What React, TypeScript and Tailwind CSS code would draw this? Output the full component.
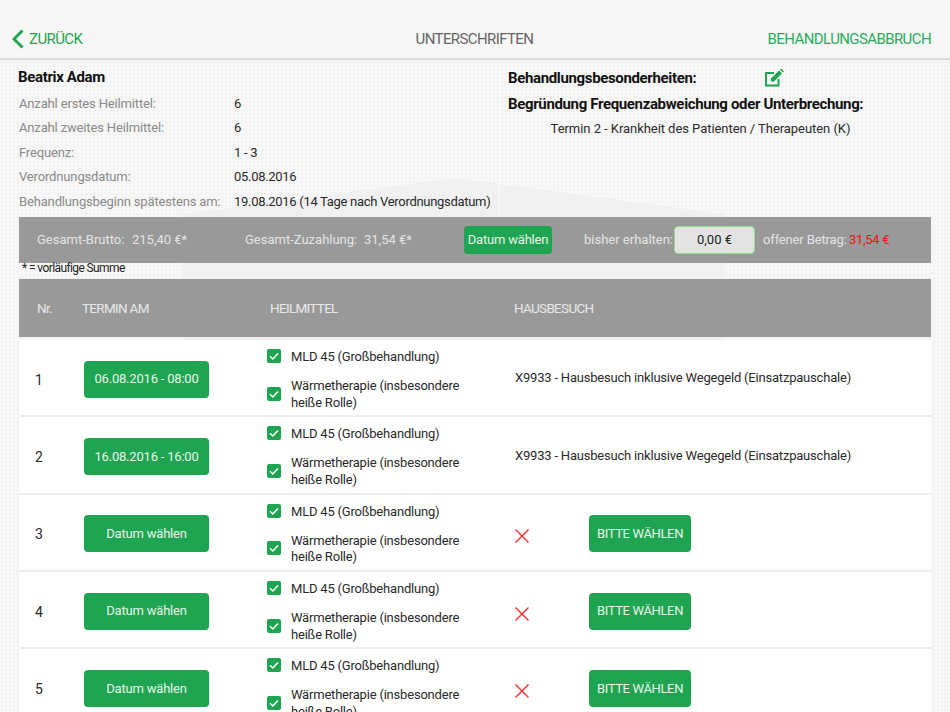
import React from 'react';

const rows = [
  { nr: 1, termin: '06.08.2016 - 08:00', besuch: true },
  { nr: 2, termin: '16.08.2016 - 16:00', besuch: true },
  { nr: 3, termin: 'Datum wählen', besuch: false },
  { nr: 4, termin: 'Datum wählen', besuch: false },
  { nr: 5, termin: 'Datum wählen', besuch: false },
];

const infos = [
  ['Anzahl erstes Heilmittel:', '6'],
  ['Anzahl zweites Heilmittel:', '6'],
  ['Frequenz:', '1 - 3'],
  ['Verordnungsdatum:', '05.08.2016'],
  ['Behandlungsbeginn spätestens am:', '19.08.2016 (14 Tage nach Verordnungsdatum)'],
];

const Check: React.FC = () => (
  <span className="flex h-[14px] w-[14px] shrink-0 items-center justify-center rounded-[2px] bg-[#1fa451]">
    <svg viewBox="0 0 14 14" className="h-[14px] w-[14px]" fill="none" stroke="#ffffff" strokeWidth="1.5">
      <path d="M3 7.2 L5.8 10 L11 4.4" />
    </svg>
  </span>
);

const Row: React.FC<{ nr: number; termin: string; besuch: boolean }> = ({ nr, termin, besuch }) => (
  <div className="flex h-[77.33px] shrink-0 items-center whitespace-nowrap border-b-2 border-[#eeeeee] bg-white pt-[3px] text-[#2a2a2a]">
    <div className="w-[65px] translate-y-px pl-[16px] text-[14px]">{nr}</div>
    <div className="w-[183px]">
      <button className="h-[37px] w-[125px] rounded-[4px] bg-[#1fa451] text-[#e6f5ea]">{termin}</button>
    </div>
    <div className="flex w-[248px] flex-col gap-[13px]">
      <div className="flex items-center gap-[10px] leading-[16px]">
        <Check />
        <span className="translate-y-px">MLD 45 (Großbehandlung)</span>
      </div>
      <div className="flex items-center gap-[10px] leading-[16.5px]">
        <Check />
        <span className="translate-y-px">
          Wärmetherapie (insbesondere
          <br />
          heiße Rolle)
        </span>
      </div>
    </div>
    {besuch ? (
      <div className="mt-[-2px]">X9933 - Hausbesuch inklusive Wegegeld (Einsatzpauschale)</div>
    ) : (
      <div className="flex items-center">
        <svg viewBox="0 0 14 14" className="mt-[5px] h-[14px] w-[14px]" fill="none" stroke="#f62a2a" strokeWidth="1.4">
          <path d="M0.5 0.5 L13.5 13.5 M13.5 0.5 L0.5 13.5" />
        </svg>
        <button className="ml-[60px] h-[37px] w-[102px] rounded-[4px] bg-[#1fa451] tracking-[-0.35px] text-[#e6f5ea]">
          BITTE WÄHLEN
        </button>
      </div>
    )}
  </div>
);

export default function App() {
  return (
    <div className="relative h-[712px] w-[950px] overflow-hidden bg-[#f7f7f7] bg-[radial-gradient(#f1f1f1_1px,transparent_1px)] bg-[length:4px_4px] font-['Roboto',sans-serif] text-[13px] tracking-[-0.2px]">
      {/* grey shape behind the content */}
      <svg className="absolute left-0 top-0" width="950" height="345" viewBox="0 0 950 345">
        <polygon points="182,214 455,178 724,214 724,345 182,345" fill="#f0f0f0" />
      </svg>

      <div className="relative flex h-full flex-col">
        <header className="flex h-[60px] shrink-0 items-end justify-between border-b-2 border-[#dcdcdc] bg-[#f7f7f7] pb-[8px] pl-[12px] pr-[19px] text-[15px] tracking-[-0.6px]">
          <div className="flex items-center gap-[5px] text-[#1fa451]">
            <svg viewBox="0 0 12 20" className="h-[20px] w-[12px]" fill="none" stroke="#1fa451" strokeWidth="3">
              <path d="M10.5 1.5 L2 10 L10.5 18.5" />
            </svg>
            <span>ZURÜCK</span>
          </div>
          <span className="ml-[99px] text-[#666666]">UNTERSCHRIFTEN</span>
          <span className="text-[#2bab5e]">BEHANDLUNGSABBRUCH</span>
        </header>

        <div className="flex h-[157px] shrink-0 whitespace-nowrap pl-[18px] pt-[6px]">
          <div className="w-[482px] border-r border-[#fbfbfb]">
            <div className="h-[25px] text-[15px] font-bold leading-[22px] tracking-[-0.35px] text-[#111111]">Beatrix Adam</div>
            {infos.map(([label, value]) => (
              <div key={label} className="flex h-[24.5px] items-center">
                <span className="ml-[1px] w-[215px] tracking-[-0.15px] text-[#8a8a8a]">{label}</span>
                <span className="tracking-[-0.3px] text-[#2a2a2a]">{value}</span>
              </div>
            ))}
          </div>
          <div className="pl-[8px]">
            <div className="flex h-[24px] items-center text-[15px] font-bold tracking-[-0.35px] text-[#111111]">
              <span className="w-[256px]">Behandlungsbesonderheiten:</span>
              <svg viewBox="0 0 20 20" className="h-[20px] w-[20px]">
                <path d="M14.5 11 V17.5 H2 V5 H10" fill="none" stroke="#1fa451" strokeWidth="2" />
                <path d="M7 10.5 L15 2.5 L18 5.5 L10 13.5 L7 13.5 Z M16 1.5 L17 0.5 L20 3.5 L19 4.5 Z" fill="#1fa451" />
              </svg>
            </div>
            <div className="mt-[2px] h-[24px] text-[15px] font-bold leading-[24px] tracking-[-0.35px] text-[#111111]">
              Begründung Frequenzabweichung oder Unterbrechung:
            </div>
            <div className="mt-[1px] w-[385px] text-center leading-[24px] tracking-[-0.05px] text-[#2a2a2a]">
              Termin 2 - Krankheit des Patienten / Therapeuten (K)
            </div>
          </div>
        </div>

        <div className="ml-[19px] flex h-[46px] w-[912px] shrink-0 items-center whitespace-nowrap bg-[#999999] tracking-normal text-[#e4e4e4]">
          <span className="ml-[18px] w-[95px]">Gesamt-Brutto:</span>
          <span className="w-[113px]">215,40 €*</span>
          <span className="w-[119px]">Gesamt-Zuzahlung:</span>
          <span className="w-[100px]">31,54 €*</span>
          <button className="h-[28px] w-[88px] rounded-[4px] bg-[#1fa451] tracking-[-0.2px] text-[#e6f5ea]">Datum wählen</button>
          <span className="ml-[32px] w-[90px]">bisher erhalten:</span>
          <span className="flex h-[28px] w-[81px] items-center justify-center rounded-[4px] border border-[#8ce08c] bg-[#e3e3e3] text-[#222222]">
            0,00 €
          </span>
          <span className="ml-[8px] w-[86px] tracking-[-0.15px]">offener Betrag:</span>
          <span className="tracking-[-0.3px] text-[#f01414]">31,54 €</span>
        </div>

        <div className="ml-[22px] h-[16px] shrink-0 text-[12px] leading-[11px] tracking-[-0.6px] text-[#222222]">* = vorläufige Summe</div>

        <div className="ml-[19px] flex h-[58px] w-[912px] shrink-0 items-center bg-[#999999] pt-[1px] text-[13.5px] tracking-[-0.7px] text-[#e8e8e8]">
          <span className="w-[63px] pl-[18px]">Nr.</span>
          <span className="w-[188px]">TERMIN AM</span>
          <span className="w-[244px]">HEILMITTEL</span>
          <span>HAUSBESUCH</span>
        </div>

        <div className="ml-[19px] mt-[3px] flex w-[912px] flex-col">
          {rows.map((r) => (
            <Row key={r.nr} {...r} />
          ))}
        </div>
      </div>
    </div>
  );
}
